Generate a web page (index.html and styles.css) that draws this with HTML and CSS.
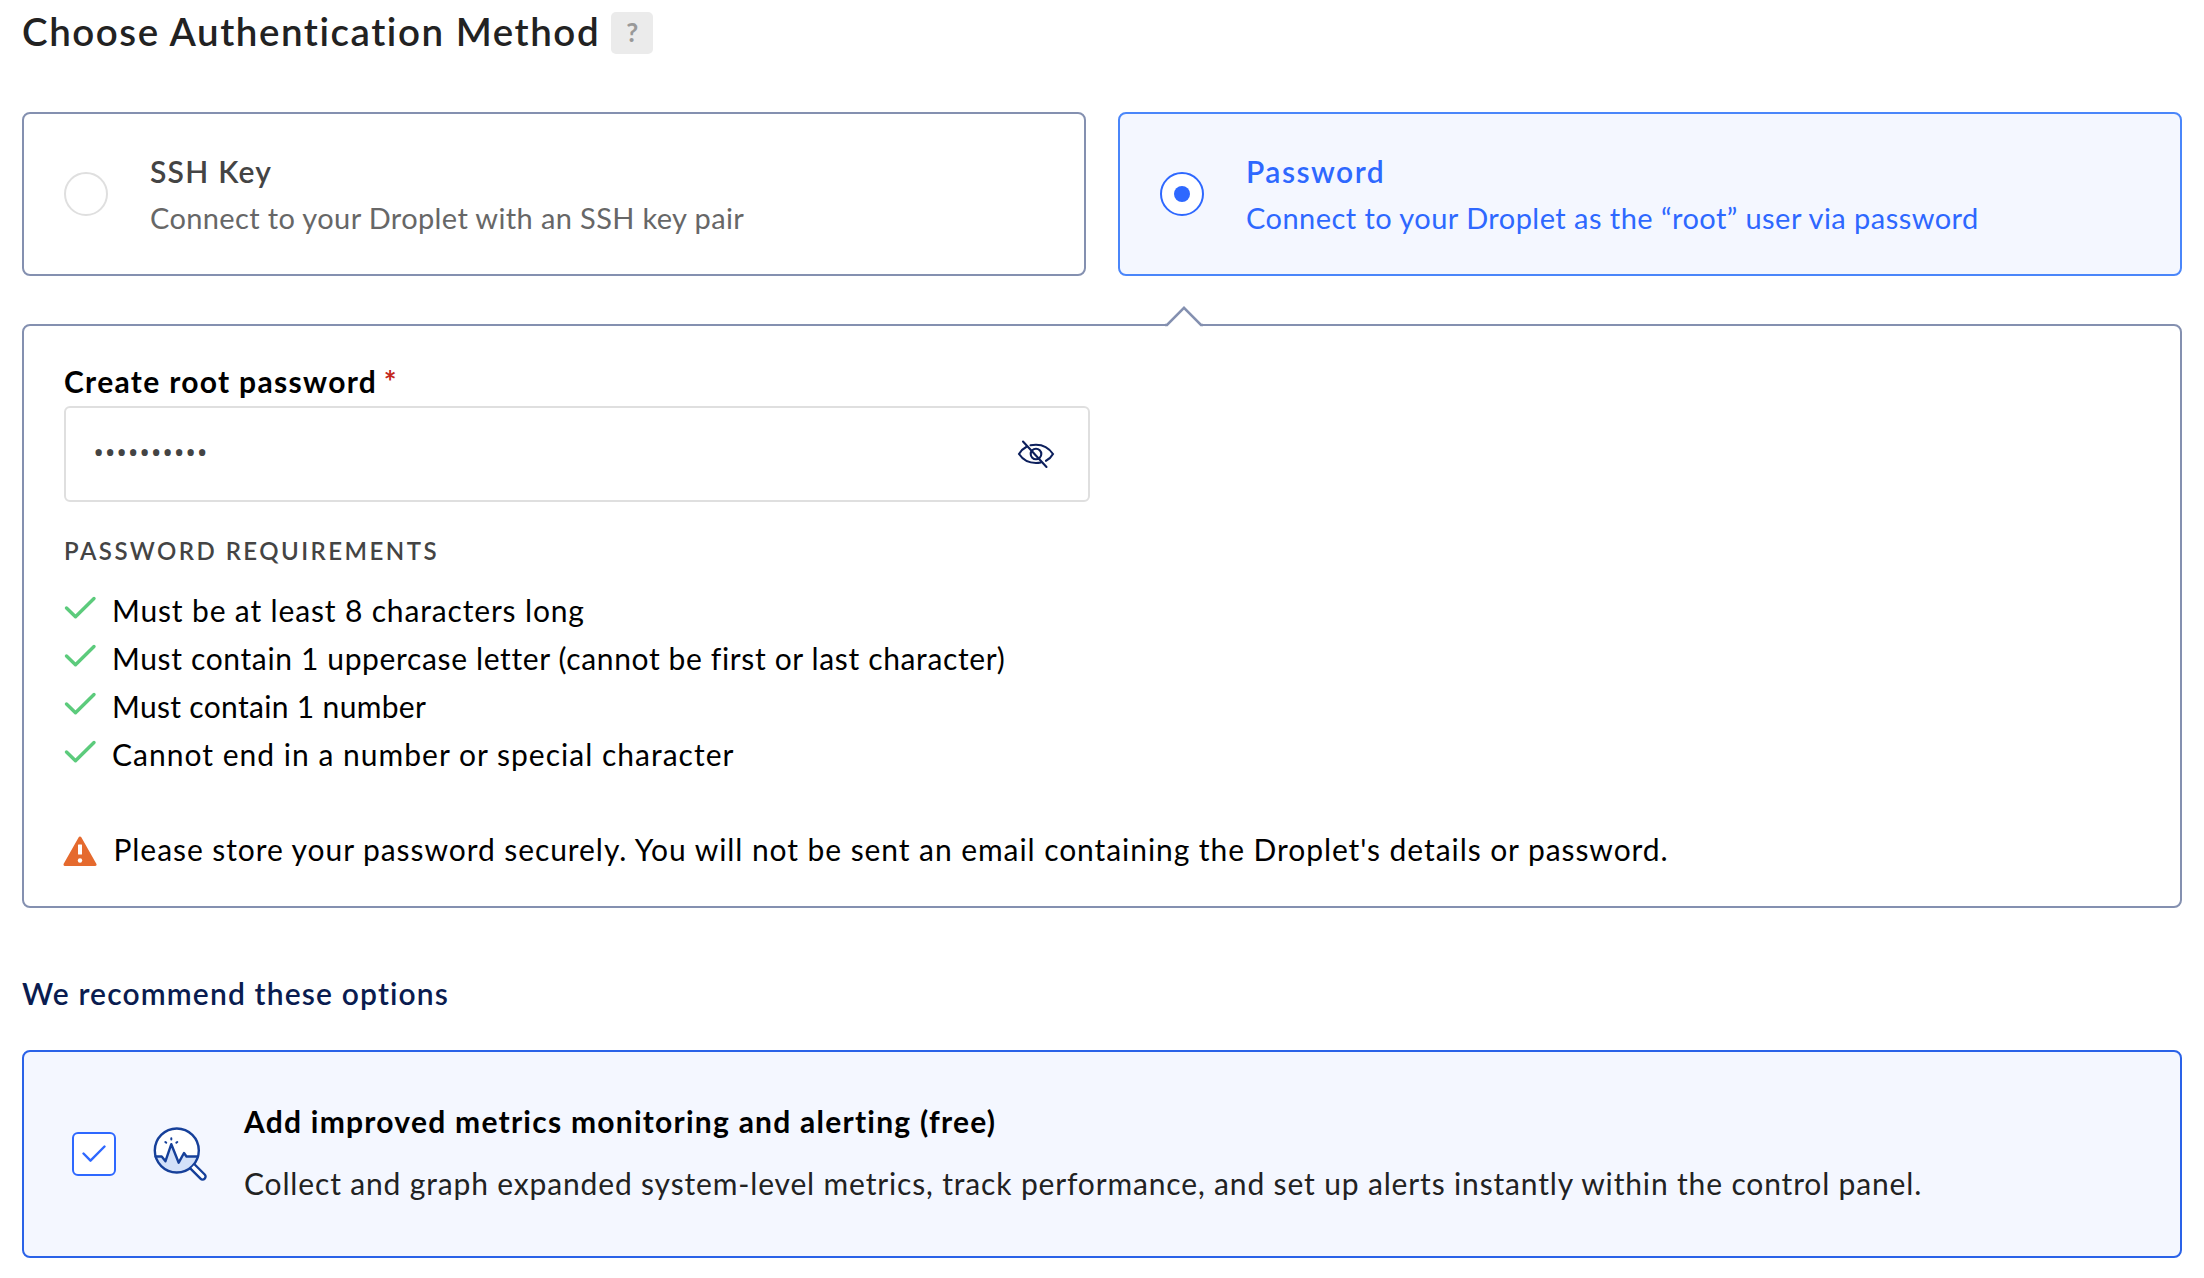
FILE: index.html
```html
<!DOCTYPE html>
<html lang="en">
<head>
<meta charset="utf-8">
<title>Choose Authentication Method</title>
<link rel="stylesheet" href="styles.css">
</head>
<body>
<main class="page">
  <header class="page-header">
    <h1 class="page-title">Choose Authentication Method</h1>
    <span class="help">?</span>
  </header>

  <section class="methods">
    <div class="method">
      <span class="radio"></span>
      <div class="method-text">
        <div class="method-name name-ssh">SSH Key</div>
        <div class="method-desc desc-ssh">Connect to your Droplet with an SSH key pair</div>
      </div>
    </div>
    <div class="method method-selected">
      <span class="radio radio-on"></span>
      <div class="method-text">
        <div class="method-name name-password">Password</div>
        <div class="method-desc desc-password">Connect to your Droplet as the “root” user via password</div>
      </div>
    </div>
  </section>

  <section class="panel">
    <svg class="panel-arrow" width="38" height="22" viewBox="0 0 38 22">
      <path d="M1.5 19.5 19 1.8 36.500 19.500V22H1.500Z" fill="#fff"/>
      <path d="M0 19H2L19 1.800 36 19H38" fill="none" stroke="#8490b0" stroke-width="2.500"/>
    </svg>
    <div class="label">Create root password <span class="required">*</span></div>
    <div class="field">
      <span class="field-value">••••••••••</span>
      <svg class="eye" width="38" height="30" viewBox="0 0 38 30" fill="none" stroke="#0c1f5c" stroke-width="2.100" stroke-linecap="round">
        <path d="M13.500 5.300C15.200 4.900 17 4.700 19 4.700C26 4.700 32 8 36 14C34.200 17.200 31.800 19.400 29 20.800"/>
        <path d="M9.200 7C6.200 8.500 3.700 11 2 14C6 20 12 23 19 23C20.700 23 22.300 22.800 23.800 22.500"/>
        <circle cx="19" cy="14" r="5.300"/>
        <path d="M6 1.500 29.500 27"/>
      </svg>
    </div>
    <div class="requirements-title">PASSWORD REQUIREMENTS</div>
    <ul class="requirements">
      <li class="requirement req-length"><svg class="check" width="34" height="26" viewBox="0 0 34 26"><path d="M2.500 13 11.500 21.800 30 3.500"/></svg>Must be at least 8 characters long</li>
      <li class="requirement req-upper"><svg class="check" width="34" height="26" viewBox="0 0 34 26"><path d="M2.500 13 11.500 21.800 30 3.500"/></svg>Must contain 1 uppercase letter (cannot be first or last character)</li>
      <li class="requirement req-number"><svg class="check" width="34" height="26" viewBox="0 0 34 26"><path d="M2.500 13 11.500 21.800 30 3.500"/></svg>Must contain 1 number</li>
      <li class="requirement req-end"><svg class="check" width="34" height="26" viewBox="0 0 34 26"><path d="M2.500 13 11.500 21.800 30 3.500"/></svg>Cannot end in a number or special character</li>
    </ul>
    <div class="notice">
      <svg class="notice-icon" width="34" height="31" viewBox="0 0 34 31">
        <path d="M17 2 32 28.500H2Z" fill="#e56a2e" stroke="#e56a2e" stroke-width="3" stroke-linejoin="round"/>
        <rect x="15" y="8.500" width="4" height="10" rx=".5" fill="#fff"/>
        <circle cx="17" cy="24.500" r="2.200" fill="#fff"/>
      </svg>
      <span>Please store your password securely. You will not be sent an email containing the Droplet's details or password.</span>
    </div>
  </section>

  <h2 class="options-title">We recommend these options</h2>
  <section class="option">
    <span class="checkbox">
      <svg width="24" height="18" viewBox="0 0 24 18" fill="none" stroke="#2e68ff" stroke-width="2.400" stroke-linecap="round" stroke-linejoin="round"><path d="M1.500 8.500 8.500 15.700 22.500 1.500"/></svg>
    </span>
    <svg class="metrics-icon" width="56" height="56" viewBox="0 0 56 56" fill="none" stroke="#16409a" stroke-width="2.400" stroke-linejoin="round" stroke-linecap="round">
      <circle cx="24.800" cy="24.500" r="22" fill="#fff" stroke="none"/>
      <path d="M3.500 30.500H9.700L13.500 35.200 19.300 18.200 26.700 36.700 32 27 34.500 30.500H46A22 22 0 0 1 3.500 30.500Z" fill="#d3e1f9" stroke="none"/>
      <path d="M3.500 30.500H9.700L13.500 35.200 19.300 18.200 26.700 36.700 32 27 34.500 30.500H46"/>
      <circle cx="24.800" cy="24.500" r="22"/>
      <path d="M19.300 12.200V13.500M13.300 16 14.200 16.600M25.300 16 24.400 16.600" stroke-width="2"/>
      <path d="M38.500 42.700 48.500 52.700A2.900 2.900 0 0 0 52.700 48.500L42.700 38.500" fill="#fff"/>
    </svg>
    <div class="option-text">
      <div class="option-name">Add improved metrics monitoring and alerting (free)</div>
      <div class="option-desc">Collect and graph expanded system-level metrics, track performance, and set up alerts instantly within the control panel.</div>
    </div>
  </section>
</main>
</body>
</html>
```
FILE: styles.css
```css
* {
  box-sizing: border-box;
}

body {
  margin: 0;
  background: #fff;
  color: #000;
  font-family: Lato, "Open Sans", sans-serif;
  font-size: 30px;
  font-kerning: normal;
}

.page {
  width: 2204px;
  padding: 10px 22px 20px;
}

.page-header {
  display: flex;
  align-items: flex-start;
  gap: 11px;
  height: 102px;
}

.page-title {
  margin: 0;
  font-size: 38.5px;
  font-weight: 600;
  line-height: 42px;
  letter-spacing: 1.550px;
  color: #222;
}

.help {
  width: 42px;
  height: 42px;
  margin-top: 2px;
  border-radius: 5px;
  background: #ebebeb;
  color: #999;
  font-size: 26px;
  font-weight: 700;
  line-height: 40px;
  text-align: center;
}

.methods {
  display: grid;
  grid-template-columns: 1fr 1fr;
  gap: 32px;
}

.method {
  display: flex;
  align-items: center;
  gap: 42px;
  height: 164px;
  padding-left: 40px;
  border: 2px solid #8490b0;
  border-radius: 8px;
}

.method-selected {
  border-color: #4a86fa;
  background: #f4f7ff;
}

.radio {
  display: flex;
  align-items: center;
  justify-content: center;
  width: 44px;
  height: 44px;
  border: 2px solid #dfdfdf;
  border-radius: 50%;
  background: #fff;
}

.radio-on {
  border-color: #2e68ff;
}

.radio-on::after {
  content: "";
  width: 16px;
  height: 16px;
  border-radius: 50%;
  background: #2e68ff;
}

.method-text {
  line-height: 46px;
}

.method-name {
  font-weight: 600;
  color: #444;
}

.method-desc {
  font-size: 29px;
  line-height: 47px;
  color: #676767;
}

.method-selected .method-name,
.method-selected .method-desc {
  color: #2e68ff;
}

.name-ssh { letter-spacing: 1.250px; }
.desc-ssh { letter-spacing: 0.367px; }
.name-password { letter-spacing: 1.480px; }
.desc-password { letter-spacing: 0.455px; }

.panel {
  position: relative;
  height: 584px;
  margin-top: 48px;
  padding: 35px 40px 33px;
  border: 2px solid #8490b0;
  border-radius: 8px;
}

/* Pointer that ties the panel to the selected method */
.panel-arrow {
  position: absolute;
  top: -20px;
  left: 1141px;
}

.label {
  font-weight: 700;
  line-height: 40px;
  letter-spacing: 1.316px;
}

.required {
  margin-left: -2px;
  color: #c4271b;
}

.field {
  display: flex;
  align-items: center;
  justify-content: space-between;
  width: 1026px;
  height: 96px;
  margin-top: 5px;
  padding: 0 33px 0 27px;
  border: 2px solid #dfdfdf;
  border-radius: 6px;
}

.field-value {
  padding-bottom: 6px;
  color: #444;
  font-family: "Open Sans", sans-serif;
  letter-spacing: 0.210px;
}

.eye {
  margin-top: 2px;
}

.requirements-title {
  margin-top: 33px;
  color: #444;
  font-size: 24px;
  font-weight: 600;
  line-height: 32px;
  letter-spacing: 2.457px;
}

.requirements {
  margin: 20px 0 0;
  padding: 0;
  list-style: none;
}

.requirement {
  display: flex;
  gap: 14px;
  line-height: 47px;
  height: 48px;
}

.req-length { letter-spacing: 0.850px; }
.req-upper { letter-spacing: 0.640px; }
.req-number { letter-spacing: 0.326px; }
.req-end { letter-spacing: 1.015px; }

.check {
  margin-top: 8px;
  fill: none;
  stroke: #5ccb7c;
  stroke-width: 3.400;
  stroke-linecap: round;
  stroke-linejoin: round;
}

.notice {
  display: flex;
  gap: 16.500px;
  margin-top: 46px;
  line-height: 48px;
  letter-spacing: 0.930px;
}

.notice-icon {
  margin: 11px 0 0 -1px;
}

.options-title {
  margin: 61px 0 33px;
  color: #0a1c50;
  font-size: 30px;
  font-weight: 600;
  line-height: 48px;
  letter-spacing: 1.150px;
}

.option {
  display: flex;
  align-items: flex-start;
  height: 208px;
  padding: 38px 48px 0;
  border: 2px solid #2a62e8;
  border-radius: 8px;
  background: #f4f7ff;
}

.checkbox {
  display: flex;
  align-items: center;
  justify-content: center;
  width: 44px;
  height: 44px;
  margin-top: 42px;
  border: 2px solid #2e68ff;
  border-radius: 6px;
  background: #fff;
}

.metrics-icon {
  margin: 36px 0 0 36px;
}

.option-text {
  margin-left: 36px;
  line-height: 62px;
  white-space: nowrap;
}

.option-name {
  font-weight: 700;
  letter-spacing: 1.245px;
}

.option-desc {
  color: #222;
  letter-spacing: 0.845px;
}
```
